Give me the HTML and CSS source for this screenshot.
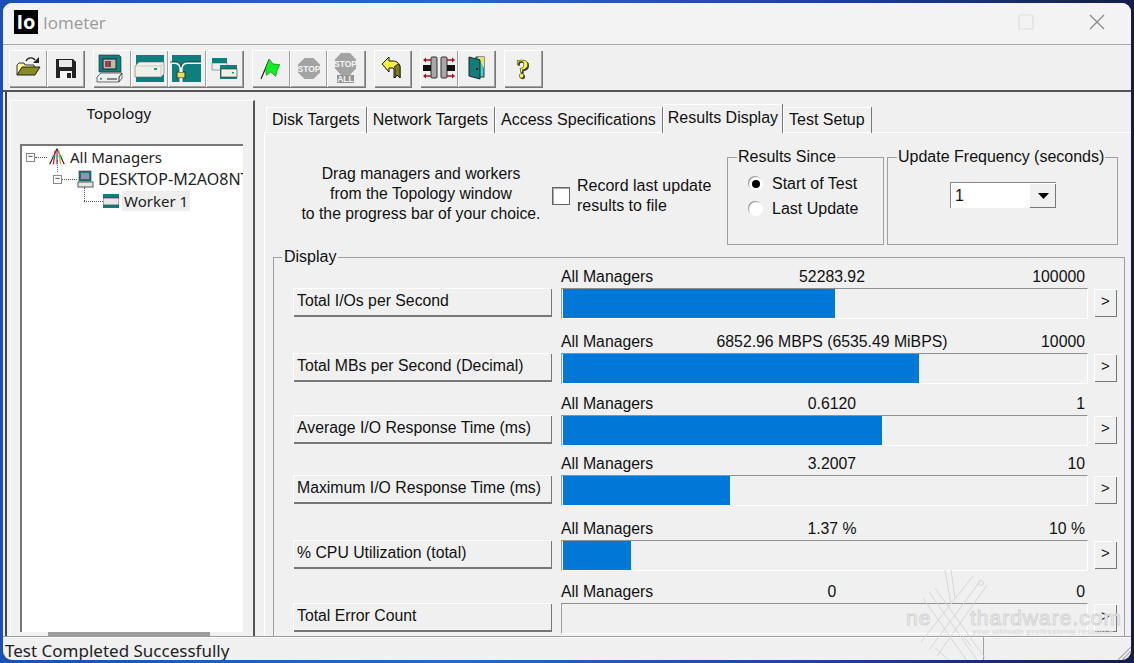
FILE: index.html
```html
<!DOCTYPE html>
<html lang="en">
<head>
<meta charset="utf-8">
<title>Iometer</title>
<link rel="stylesheet" href="styles.css">
</head>
<body>
<div class="window">
  <header class="titlebar">
    <div class="logo">Io</div>
    <div class="title">Iometer</div>
    <div class="winbtns">
      <svg class="wb-max" width="16" height="16" viewBox="0 0 16 16"><rect x="1" y="1" width="14" height="14" rx="2" fill="none" stroke="#dcdcdc" stroke-width="1.2"/></svg>
      <svg class="wb-close" width="18" height="18" viewBox="0 0 18 18"><path d="M2 2L16 16M16 2L2 16" stroke="#8a8a8a" stroke-width="1.3"/></svg>
    </div>
  </header>

  <nav class="toolbar">
    <div class="tgroup">
      <button class="tb"><svg width="38" height="38" viewBox="0 0 38 38"><path d="M8 25V15l2-2h5l1 2h9v3" fill="#ffff99" stroke="#333"/><path d="M8 25l5-8h18l-5 8z" fill="#8a8a1e" stroke="#222"/><path d="M17 11c2-4 7-4 9-1" fill="none" stroke="#222" stroke-width="1.4"/><path d="M24 13h6V7z" fill="#222"/></svg></button>
      <button class="tb"><svg width="38" height="38" viewBox="0 0 38 38"><path d="M9 9h17l3 3v16H9z" fill="#222"/><rect x="12" y="10" width="13" height="7" fill="#e8e8e8"/><rect x="13" y="21" width="12" height="7" fill="#f4f4f4"/><rect x="20" y="23" width="4" height="5" fill="#222"/></svg></button>
    </div>
    <div class="tgroup">
      <button class="tb"><svg width="38" height="38" viewBox="0 0 38 38"><path d="M6 5h20l2 2v15H6z" fill="#0e7f7f" stroke="#222" stroke-width=".6"/><rect x="10" y="9" width="13" height="10" fill="#bbb" stroke="#222"/><path d="M13 11v6M15 11v6" stroke="#a11" stroke-width="1.5"/><path d="M17 11v6" stroke="#22a" stroke-width="1.5"/><path d="M19 11v6" stroke="#cc3" stroke-width="1.5"/><path d="M4 27l4-4h21v5l-3 4H4z" fill="#eee" stroke="#333" stroke-width=".7"/><path d="M29 23l-3 4v5" fill="none" stroke="#333"/><rect x="7" y="28" width="2" height="1.6" fill="#0a7"/><path d="M14 29h10" stroke="#222" stroke-width="1.2"/></svg></button>
      <button class="tb"><svg width="38" height="38" viewBox="0 0 38 38"><rect x="5" y="5" width="28" height="27" fill="#0e7f7f"/><path d="M4 16l4-4h25v12l-3 3H4z" fill="#f0f0e8" stroke="#555" stroke-width=".5"/><path d="M30 15h3M30 15v12M4 16h26" fill="none" stroke="#bbb" stroke-width=".7"/><rect x="23" y="18" width="3" height="2" fill="#0a7"/></svg></button>
      <button class="tb"><svg width="38" height="38" viewBox="0 0 38 38"><rect x="4" y="5" width="29" height="27" fill="#0e7f7f"/><path d="M2 13h5c4 0 5 3 6 7 1-4 2-7 6-7h14" fill="none" stroke="#f0f0e8" stroke-width="2"/><path d="M2 12h5c4 0 6 3 6 5 0-2 2-5 6-5h14" fill="none" stroke="#111" stroke-width=".7"/><rect x="9" y="22" width="8" height="6" fill="#e8e060" stroke="#333"/><path d="M13 18v4" stroke="#fff" stroke-width="3"/><path d="M13 28v6" stroke="#f0f0e8" stroke-width="3"/></svg></button>
      <button class="tb"><svg width="38" height="38" viewBox="0 0 38 38"><rect x="6" y="8" width="15" height="12" fill="#0e7f7f"/><rect x="6" y="13" width="15" height="7" fill="#eee" stroke="#555" stroke-width=".5"/><rect x="14" y="15" width="17" height="14" fill="#0e7f7f"/><rect x="15" y="19" width="16" height="8" fill="#f0f0e8" stroke="#333" stroke-width=".6"/><rect x="26" y="22" width="2" height="1.5" fill="#0a7"/></svg></button>
    </div>
    <div class="tgroup">
      <button class="tb"><svg width="38" height="38" viewBox="0 0 38 38"><path d="M9 29l8-19" stroke="#111" stroke-width="1.1"/><path d="M17 9l4 5 6.700.7-2.700 6-1.300 5.600-5-4.300-4.400 3.300L13.700 18z" fill="#12ee22" stroke="#087a18" stroke-width=".7"/></svg></button>
      <button class="tb"><svg width="38" height="38" viewBox="0 0 38 38"><path d="M14.500 8h9l6.500 6.500v8L23.500 29h-9L8 22.500v-8z" fill="#a3a3a3"/><text x="19" y="22" class="stoptxt" text-anchor="middle">STOP</text></svg></button>
      <button class="tb"><svg width="38" height="38" viewBox="0 0 38 38"><path d="M14 3h9l6 6.500v9L23 25h-9l-6-6.500v-9z" fill="#a3a3a3"/><text x="18.500" y="17" class="stoptxt" text-anchor="middle">STOP</text><rect x="10" y="25" width="17" height="8" fill="#949494"/><text x="18.500" y="32" class="stoptxt" text-anchor="middle">ALL</text></svg></button>
    </div>
    <div class="tgroup">
      <button class="tb"><svg width="38" height="38" viewBox="0 0 38 38"><path d="M8 14l7-7v4h4c4 0 7 3 7 6v11l-3-3-3 3v-9l-1-1h-4v4z" fill="#f4f040" stroke="#111" stroke-width="1"/><path d="M20 17l1 1v10l2-3 3 3V17c0-1-1-3-2-3z" fill="#7a7a20" stroke="#111" stroke-width=".8"/></svg></button>
    </div>
    <div class="tgroup">
      <button class="tb"><svg width="38" height="38" viewBox="0 0 38 38"><rect x="11" y="7" width="6" height="21" rx="1" fill="#a8a8a8" stroke="#333"/><rect x="21" y="7" width="6" height="21" rx="1" fill="#a8a8a8" stroke="#333"/><path d="M3 15h8v6H3zM27 15h8v6h-8z" fill="#111"/><path d="M5 10h6M5 26h6M27 10h6M27 26h6" stroke="#a11" stroke-width="1.500"/><path d="M3 10l3-2.500v5zM3 26l3-2.500v5zM35 10l-3-2.500v5zM35 26l-3-2.500v5z" fill="#a11"/></svg></button>
      <button class="tb"><svg width="38" height="38" viewBox="0 0 38 38"><rect x="18" y="7" width="8" height="20" fill="#44d0d0" stroke="#333"/><path d="M20 7h6v11z" fill="#e8e860"/><path d="M11 7l11 3v19l-11-3z" fill="#0e7f7f" stroke="#222"/><rect x="18" y="18" width="2" height="2" fill="#111"/></svg></button>
    </div>
    <div class="tgroup">
      <button class="tb"><svg width="38" height="38" viewBox="0 0 38 38"><text x="18.500" y="28" class="help" text-anchor="middle">?</text></svg></button>
    </div>
  </nav>

  <main class="main">
    <aside class="topology">
      <h2 class="topo-title">Topology</h2>
      <div class="tree">
        <div class="node lv0"><span class="exp">−</span><span class="dots"></span>
          <svg class="nicon" width="20" height="20" viewBox="0 0 22 20"><path d="M11 1L3 18M11 1l8 17" stroke="#222" stroke-width="1.200" fill="none"/><path d="M9 3L7 18" stroke="#d22" stroke-width="1.500"/><path d="M11 3v15" stroke="#23c" stroke-width="1.200"/><path d="M13 3l2 15" stroke="#ea0" stroke-width="1.500"/><path d="M5 9h12" stroke="#3c9" stroke-width="1"/></svg>
          <span class="nlabel">All Managers</span></div>
        <div class="node lv1"><span class="exp">−</span><span class="dots"></span>
          <svg class="nicon" width="17" height="18" viewBox="0 0 17 18"><rect x="2" y="1" width="12" height="10" fill="#0e7f7f" stroke="#333" stroke-width=".6"/><rect x="4" y="3" width="8" height="6" fill="#9a8fb0"/><rect x="1" y="12" width="15" height="5" fill="#e8e8e8" stroke="#333" stroke-width=".8"/></svg>
          <span class="nlabel">DESKTOP-M2AO8NT</span></div>
        <div class="node lv2"><span class="dots"></span>
          <svg class="nicon" width="16" height="16" viewBox="0 0 16 16"><rect x="0" y="1" width="16" height="14" fill="#0e7f7f"/><rect x="0" y="5" width="16" height="7" rx="1" fill="#e8e8e8" stroke="#444" stroke-width=".7"/></svg>
          <span class="nlabel sel">Worker 1</span></div>
      </div>
      <div class="hscroll"><div class="thumb"></div></div>
    </aside>

    <section class="panel">
      <div class="tabs">
        <div class="tab">Disk Targets</div>
        <div class="tab">Network Targets</div>
        <div class="tab">Access Specifications</div>
        <div class="tab active">Results Display</div>
        <div class="tab">Test Setup</div>
      </div>
      <div class="pane">
        <div class="top">
          <p class="hint">Drag managers and workers<br>from the Topology window<br>to the progress bar of your choice.</p>
          <label class="record"><span class="check"></span><span>Record last update<br>results to file</span></label>
          <fieldset class="group since">
            <legend>Results Since</legend>
            <div class="radio"><span class="rb on"></span>Start of Test</div>
            <div class="radio"><span class="rb"></span>Last Update</div>
          </fieldset>
          <fieldset class="group freq">
            <legend>Update Frequency (seconds)</legend>
            <div class="combo"><span class="cval">1</span><span class="carrow"><svg width="11" height="6" viewBox="0 0 11 6"><path d="M0 0h11L5.500 6z" fill="#000"/></svg></span></div>
          </fieldset>
        </div>

        <fieldset class="display">
          <legend>Display</legend>
          <div class="rows">
            <div class="row">
              <button class="metric">Total I/Os per Second</button>
              <div class="meter">
                <div class="caps"><span>All Managers</span><span class="val">52283.92</span><span class="max">100000</span></div>
                <div class="track"><div class="fill" style="width:52%"></div></div>
              </div>
              <button class="more">&gt;</button>
            </div>
            <div class="row">
              <button class="metric">Total MBs per Second (Decimal)</button>
              <div class="meter">
                <div class="caps"><span>All Managers</span><span class="val">6852.96 MBPS (6535.49 MiBPS)</span><span class="max">10000</span></div>
                <div class="track"><div class="fill" style="width:68%"></div></div>
              </div>
              <button class="more">&gt;</button>
            </div>
            <div class="row">
              <button class="metric">Average I/O Response Time (ms)</button>
              <div class="meter">
                <div class="caps"><span>All Managers</span><span class="val">0.6120</span><span class="max">1</span></div>
                <div class="track"><div class="fill" style="width:60.9%"></div></div>
              </div>
              <button class="more">&gt;</button>
            </div>
            <div class="row">
              <button class="metric">Maximum I/O Response Time (ms)</button>
              <div class="meter">
                <div class="caps"><span>All Managers</span><span class="val">3.2007</span><span class="max">10</span></div>
                <div class="track"><div class="fill" style="width:31.9%"></div></div>
              </div>
              <button class="more">&gt;</button>
            </div>
            <div class="row">
              <button class="metric">% CPU Utilization (total)</button>
              <div class="meter">
                <div class="caps"><span>All Managers</span><span class="val">1.37 %</span><span class="max">10 %</span></div>
                <div class="track"><div class="fill" style="width:13%"></div></div>
              </div>
              <button class="more">&gt;</button>
            </div>
            <div class="row">
              <button class="metric">Total Error Count</button>
              <div class="meter">
                <div class="caps"><span>All Managers</span><span class="val">0</span><span class="max">0</span></div>
                <div class="track"></div>
              </div>
              <button class="more">&gt;</button>
            </div>
          </div>
        </fieldset>
      </div>
    </section>
  </main>

  <footer class="status">
    <div class="st-main">Test Completed Successfully</div>
    <div class="st-side"></div>
    <svg class="grip" width="14" height="14" viewBox="0 0 14 14"><path d="M14 1L1 14M14 5L5 14M14 9L9 14" stroke="#a8a8a8" stroke-width="1.100"/></svg>
  </footer>

  <div class="watermark">
    <svg class="wm-x" width="80" height="92" viewBox="0 0 80 92"><path d="M14 22L62 90M20 18L70 88M8 28L52 91M66 10L14 80M72 15L22 86M58 6L6 72M30 0l6 34M36 0l4 28M20 78l14 12M48 66l8 10" fill="none" stroke="#d6d6d6" stroke-width="1"/><circle cx="66" cy="13" r="2.500" fill="none" stroke="#d6d6d6"/></svg>
    <span class="wm-ne">ne</span>
    <span class="wm-th">thardware.com</span>
    <span class="wm-sub">your ultimate professional resource</span>
  </div>
</div>
</body>
</html>
```
FILE: styles.css
```css
* { box-sizing: border-box; }
html, body { margin: 0; height: 100%; }
body {
  width: 1134px; height: 663px; overflow: hidden;
  padding: 3px 3px 3px 3px;
  background: linear-gradient(90deg, #1b4fb4 0%, #2a68c8 40%, #1c3f96 75%, #141c4a 100%);
  font-family: "Liberation Sans", Arial, sans-serif;
  font-size: 16px; color: #111;
}
.window {
  position: relative;
  width: 100%; height: 100%;
  background: #f0f0f0;
  border-radius: 9px;
  overflow: hidden;
  display: flex; flex-direction: column;
}
button { font-family: inherit; font-size: inherit; color: inherit; margin: 0; padding: 0; }

/* title bar */
.titlebar {
  height: 42px; flex: none;
  background: #f3f3f3;
  display: flex; align-items: center;
  padding: 0 0 3px 11px;
  border-bottom: 1px solid #a8a8a8;
}
.logo {
  width: 24px; height: 24px; background: #000; color: #fff;
  font: bold 20px/24px "Open Sans", sans-serif; text-align: center;
}
.title { margin-left: 5px; color: #9a9a9a; font: 17px "Open Sans", sans-serif; }
.winbtns { margin-left: auto; display: flex; align-items: center; gap: 54px; padding-right: 25px; }

/* toolbar */
.toolbar {
  height: 47px; flex: none;
  display: flex; gap: 9px;
  padding: 5px 0 0 6px;
  background: #f0f0f0;
  border-bottom: 2px solid #555;
}
.tgroup { display: flex; }
.tb {
  width: 37.5px; height: 37px;
  background: #f0f0f0;
  border: none;
  box-shadow: inset 1px 1px 0 #fff, inset -1px -1px 0 #a0a0a0, 1px 1px 0 #777;
  display: flex; overflow: hidden;
}
.tb svg { flex: none; }
.stoptxt { font: bold 8.500px "Liberation Sans", sans-serif; fill: #f4f4f4; }
.help { font: bold 28px "Liberation Serif", serif; fill: #f6f63a; stroke: #222; stroke-width: .5px; filter: drop-shadow(1px 1px 0 #333); }

/* main */
.main {
  flex: 1; min-height: 0;
  display: flex;
  border-left: 2px solid #444;
  margin-left: 2px;
  overflow: hidden;
}
.topology {
  width: 245px; flex: none;
  margin: 8px 0 0 3px;
  border-top: 1px solid #fff;
  border-left: 1px solid #fff;
  border-right: 2px solid #555;
  display: flex; flex-direction: column;
}
.topo-title {
  margin: 0; height: 43px;
  text-align: center; font: 400 15px/25px "Noto Sans", sans-serif;
  color: #111; padding-right: 26px;
}
.tree {
  flex: 1; min-height: 0;
  margin-left: 9px; width: 223px;
  background: #fff;
  border-top: 2px solid #777;
  border-left: 2px solid #777;
  overflow: hidden;
  font: 15px "Noto Sans", sans-serif;
  color: #222;
}
.node { position: relative; height: 22px; display: flex; align-items: center; white-space: nowrap; }
.lv0 { padding-left: 4px; }
.lv1 { padding-left: 31px; }
.lv2 { padding-left: 62px; }
.lv1 .nlabel { font-size: 16px; }
.lv0::before, .lv2::before { content: ""; position: absolute; border-left: 1px dotted #555; }
.lv0::before { left: 35px; top: 14px; height: 12px; }
.lv2::before { left: 62px; top: -3px; height: 14px; }
.exp {
  width: 9px; height: 9px; flex: none;
  border: 1px solid #888; background: #fff;
  font: 9px/6px "Liberation Mono", monospace; text-align: center; color: #000;
}
.dots { width: 12px; border-top: 1px dotted #555; flex: none; }
.lv1 .dots { width: 15px; }
.lv2 .dots { width: 19px; }
.nicon { flex: none; margin-right: 1px; }
.lv1 .nicon { margin-right: 2px; }
.lv2 .nicon { margin-right: 3px; }
.nlabel { padding: 0 2px; }
.sel { background: #eeeeee; }
.hscroll {
  height: 4px; flex: none; margin-left: 9px; width: 223px; background: #f0f0f0;
  padding-left: 28px;
}
.thumb { width: 162px; height: 4px; background: #9c9c9c; }

/* tabs */
.panel { flex: 1; min-width: 0; display: flex; flex-direction: column; padding: 13px 0 0 9px; }
.tabs { display: flex; height: 28px; padding-left: 2px; align-items: flex-end; flex: none; border-bottom: 1px solid #fff; }
.tab {
  height: 26px; padding: 0 6px; line-height: 26px;
  border-right: 1px solid #777;
  box-shadow: inset 1px 1px 0 #fff;
  white-space: nowrap; position: relative; top: 1px;
}
.tab.active { height: 29px; line-height: 27px; background: #f0f0f0; padding: 0 4px 0 5px; z-index: 1; }

.pane { flex: 1; min-height: 0; border-left: 1px solid #fff; overflow: hidden; padding: 0 0 0 8px; }
.top { display: flex; height: 115px; padding-top: 25px; }
.hint { margin: 6px 0 0 20px; width: 256px; flex: none; text-align: center; line-height: 20px; font-size: 15.75px; }
.record { display: flex; gap: 7px; align-items: center; margin: 13px 0 0 3px; width: 175px; flex: none; height: 50px; line-height: 20px; }
.check { width: 18px; height: 18px; flex: none; background: #fff; border: 1px solid #666; box-shadow: inset 1px 1px 0 #aaa; }

fieldset {
  margin: 0; padding: 0;
  border: 1px solid #a0a0a0;
  min-width: 0;
}
legend { padding: 0 1px; margin-left: 9px; }
.group { height: 97px; margin-top: -10px; flex: none; }
.since { width: 157px; margin-right: 3px; padding-top: 5px; }
.since .radio { margin-left: 21px; }
.freq { width: 231px; }
.radio { display: flex; align-items: center; gap: 9px; height: 25px; }
.rb {
  width: 14px; height: 14px; border-radius: 50%; background: #fff;
  box-shadow: -1px -1px 0 #999; display: flex; align-items: center; justify-content: center;
}
.rb.on::after { content: ""; width: 8px; height: 8px; border-radius: 50%; background: #000; }
.combo {
  width: 106px; height: 26px; margin: 16px 0 0 62px;
  background: #fff; display: flex; align-items: center; justify-content: space-between;
  border-top: 1px solid #888; border-left: 1px solid #888;
  padding-left: 4px;
}
.carrow {
  width: 26px; height: 24px; background: #f0f0f0; display: flex; align-items: center; justify-content: center;
  box-shadow: inset -1px -1px 0 #777;
}

.display { height: 500px; width: 852px; padding: 0; }
.display legend { margin-left: 8px; padding: 0 2px 0 2px; }
.rows { display: grid; grid-template-rows: 65px 62px 60px 65px 63px 60px; padding: 2px 0 0 19px; }
.row { display: grid; grid-template-columns: 268px 527px 29px; align-items: start; }
.metric {
  height: 29px; margin-top: 20px; width: 259px;
  background: #f0f0f0; border: none; text-align: left; padding: 0 0 4px 4px;
  box-shadow: inset 1px 1px 0 #fff, inset -1px -2px 0 #777;
  border-radius: 0; font-size: 15.8px;
}
.meter { width: 527px; font-size: 15.8px; }
.caps { position: relative; display: flex; justify-content: space-between; height: 20px; line-height: 18px; padding-right: 3px; }
.val { position: absolute; left: 271px; transform: translateX(-50%); white-space: nowrap; }
.track {
  height: 31px; width: 527px;
  border-top: 1px solid #909090; border-left: 1px solid #a0a0a0;
  border-bottom: 1px solid #fff; border-right: 1px solid #fff;
  padding-left: 1px;
}
.fill { height: 29px; background: #0078d7; }
.more {
  width: 23px; height: 28px; margin: 21px 0 0 6px;
  background: #f0f0f0; border: none; font-size: 15px; padding-bottom: 5px;
  box-shadow: inset 1px 1px 0 #fff, inset -1px -1px 0 #777;
}

/* status bar */
.status {
  height: 24px; flex: none; position: relative;
  display: flex;
  border-top: 1px solid #a0a0a0;
  box-shadow: inset 0 1px 0 #fff;
  font: 17px/18px "Noto Sans", sans-serif; color: #222;
}
.st-main { width: 981px; padding: 5px 0 0 2px; border-right: 1px solid #a0a0a0; }
.grip { position: absolute; right: 0; bottom: 0; }

/* watermark */
.watermark { position: absolute; left: 900px; top: 566px; width: 228px; height: 94px; pointer-events: none; }
.wm-x { position: absolute; left: 12px; top: 1px; }
.wm-ne, .wm-th { color: #f4f4f4; -webkit-text-stroke: 1px #d4d4d4; font-family: "Liberation Sans", sans-serif; }
.wm-ne { position: absolute; left: 3px; top: 37px; font-size: 21px; letter-spacing: 1px; }
.wm-th { position: absolute; left: 67px; top: 37px; font-size: 21px; letter-spacing: 1px; white-space: nowrap; }
.wm-sub { position: absolute; left: 69px; top: 58px; font: bold 8px "Liberation Sans", sans-serif; white-space: nowrap; color: #dcdcdc; letter-spacing: .15px; }
```
